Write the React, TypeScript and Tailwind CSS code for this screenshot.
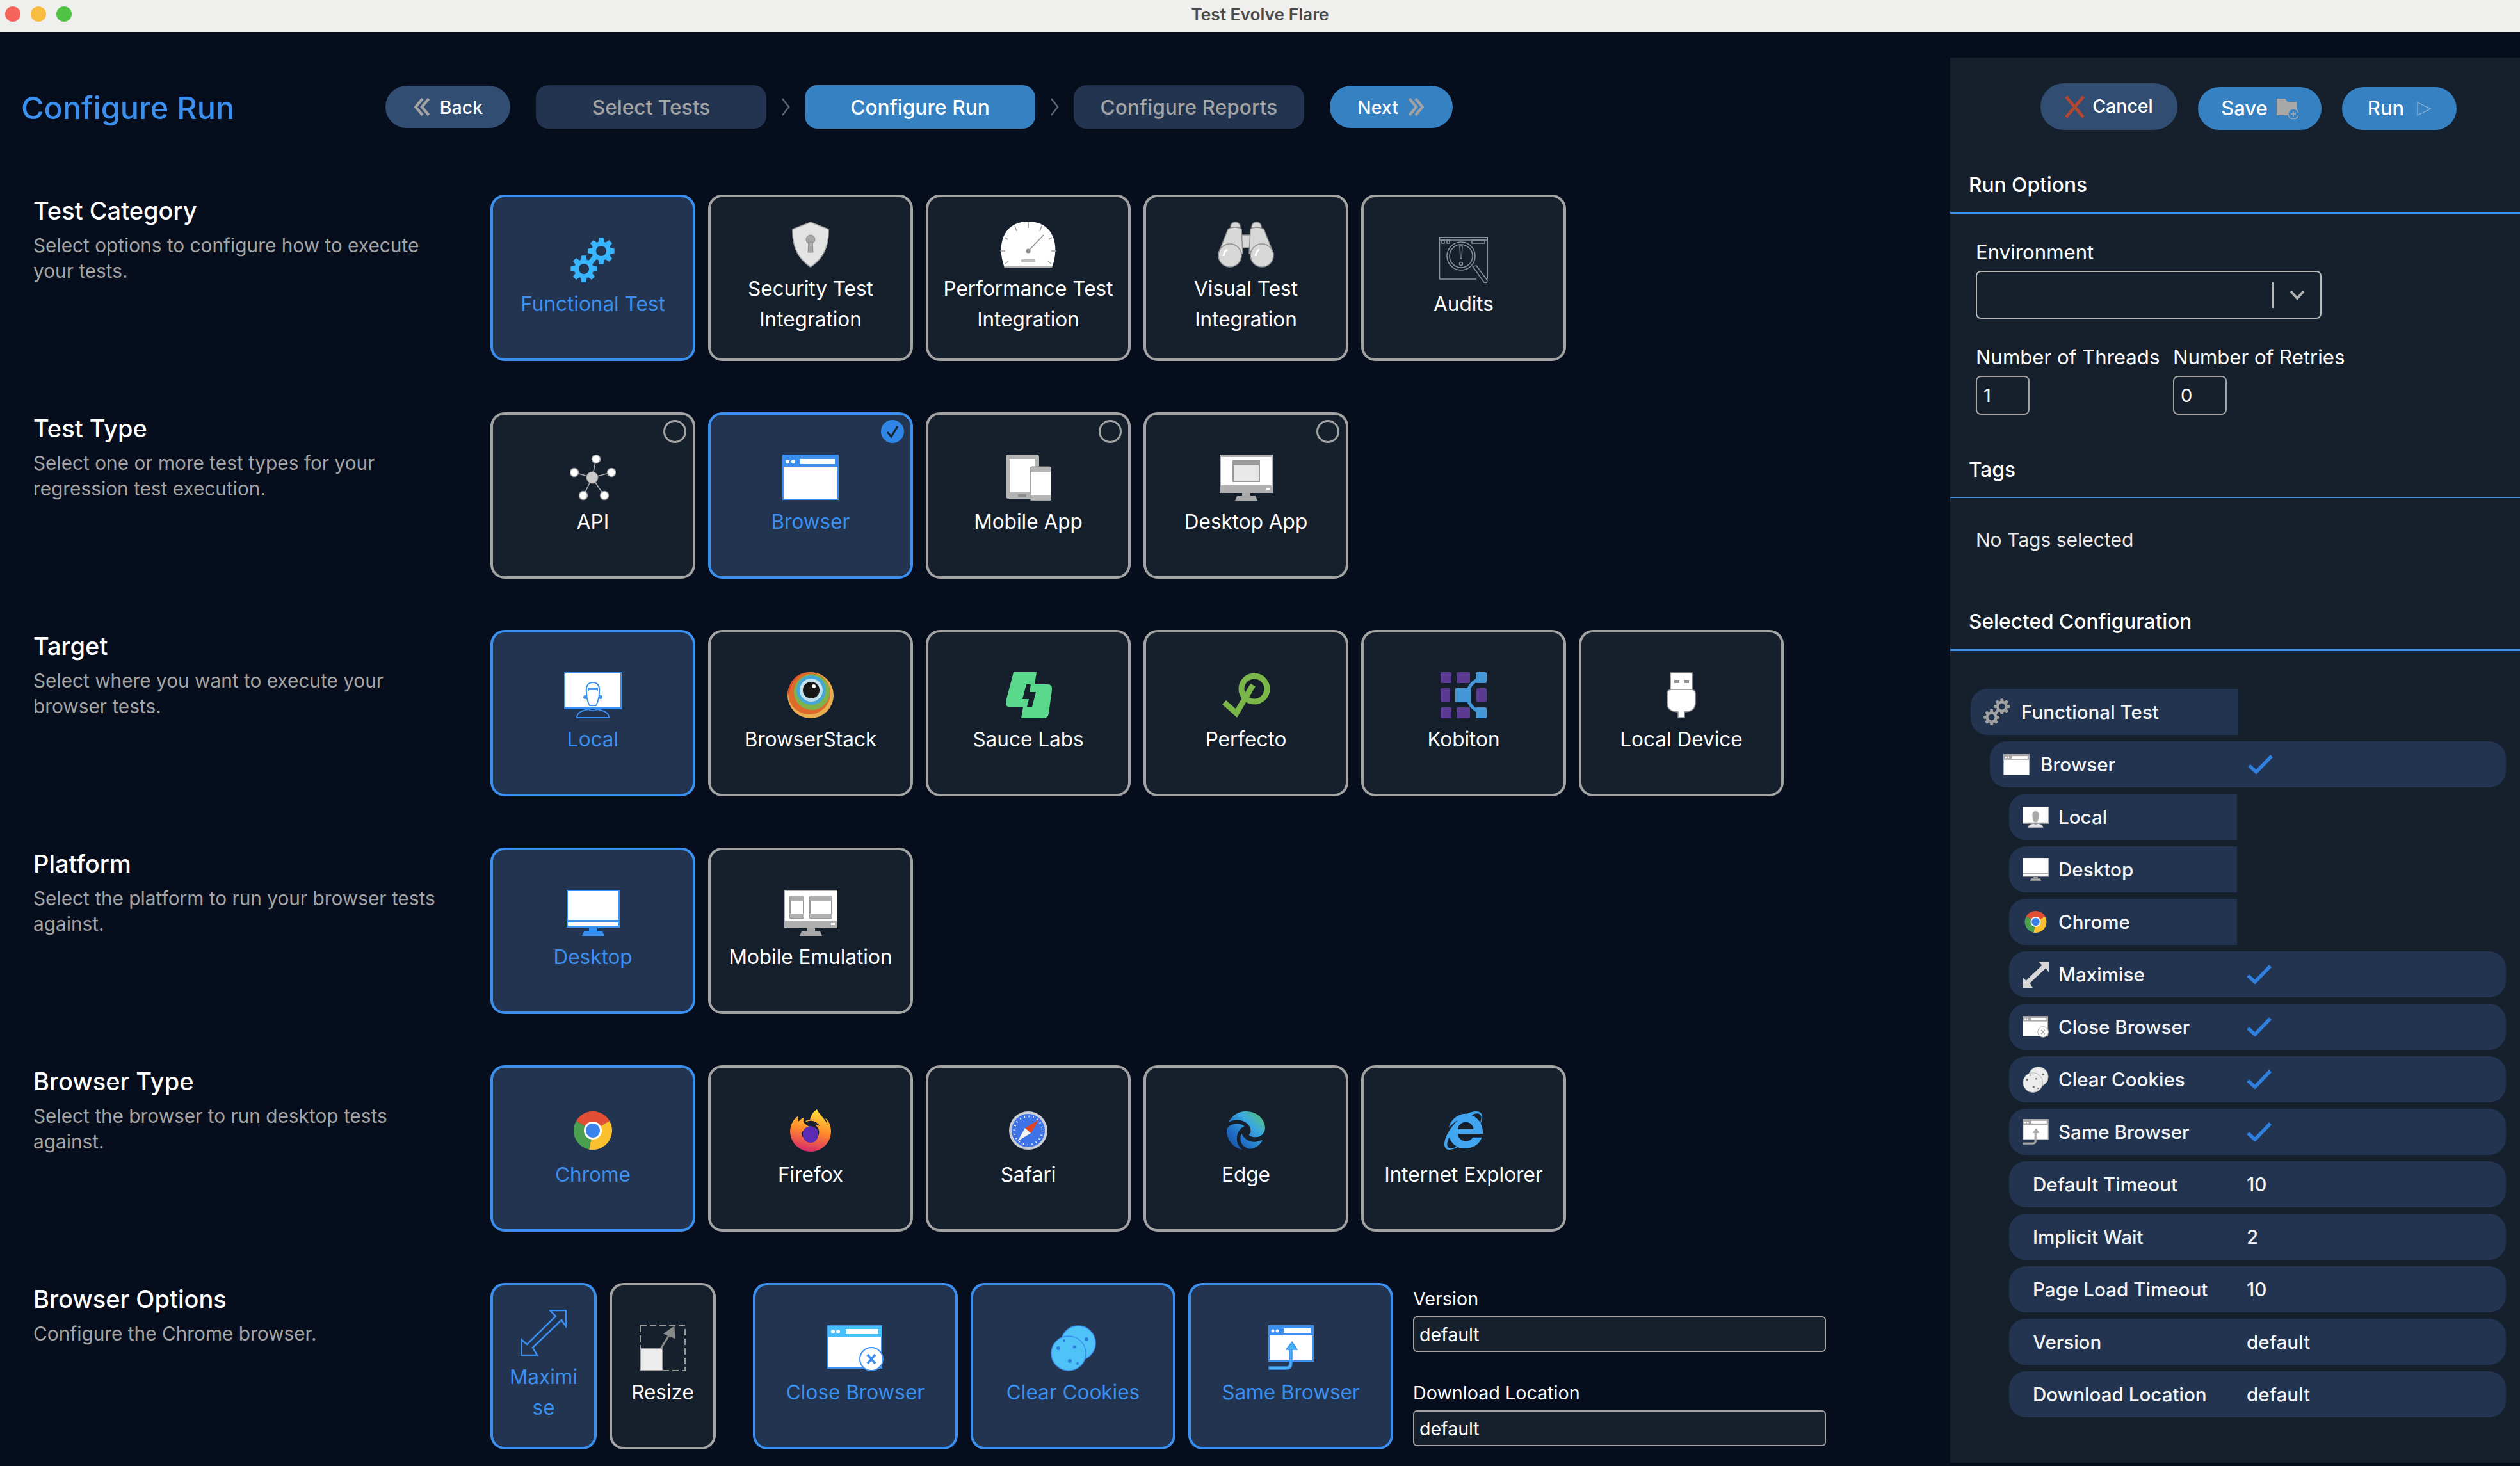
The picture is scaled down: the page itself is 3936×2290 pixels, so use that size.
import { FaInternetExplorer } from 'react-icons/fa';
import { FaEdge } from 'react-icons/fa6';
import { SiFirefoxbrowser } from 'react-icons/si';
import type { ReactNode } from 'react';

const BLUE = '#3b8fee';
const GRAY = '#9f9f9f';

type IconProps = { c?: string; className?: string };

// eight toothed gear, drawn from polar points
const gearPath = (cx: number, cy: number) => {
  const pts: string[] = [];
  for (let i = 0; i < 8; i++) {
    const a = (i * Math.PI) / 4;
    [[-0.3, 15], [-0.17, 21], [0.17, 21], [0.3, 15]].forEach(([d, r]) => {
      pts.push(`${(cx + r * Math.sin(a + d)).toFixed(1)} ${(cy - r * Math.cos(a + d)).toFixed(1)}`);
    });
  }
  return `M${pts.join(' L')} Z M${cx - 8} ${cy} a8 8 0 1 0 16 0 a8 8 0 1 0 -16 0 Z`;
};

const GearsIcon = ({ c = '#38b6ff', className = 'h-[72px] w-[70px]' }: IconProps) => (
  <svg viewBox="0 0 70 72" className={className}>
    <path d={gearPath(48, 22)} fill={c} fillRule="evenodd" />
    <path d={gearPath(21, 50)} fill={c} fillRule="evenodd" />
  </svg>
);

const ShieldIcon = () => (
  <svg viewBox="0 0 60 72" className="h-[72px] w-[60px]">
    <path d="M30 1 L58 12 C59 38 50 58 30 71 C10 58 1 38 2 12 Z" fill="#e4e4e4" stroke="#9f9f9f" strokeWidth="1.5" />
    <circle cx="30" cy="28" r="7" fill="#a8a8a8" stroke="#8c8c8c" />
    <path d="M27 32 H33 L34 48 H26 Z" fill="#a8a8a8" stroke="#8c8c8c" />
  </svg>
);

const GaugeIcon = () => (
  <svg viewBox="0 0 90 72" className="h-[72px] w-[90px]">
    <path d="M8 72 C-5 38 5 0 45 0 C85 0 95 38 82 72 Z" fill="#fff" />
    <path d="M45 1 V10 M24 7 L27 15 M66 7 L63 15 M8 25 L13 28 M82 25 L77 28 M1 46 H9 M89 46 H81 M9 66 L14 62 M81 66 L76 62" stroke="#9f9f9f" strokeWidth="1.6" />
    <path d="M45 46 L69 21" stroke="#8c8c8c" strokeWidth="1.8" />
    <circle cx="45" cy="46" r="3.5" fill="#8c8c8c" />
    <rect x="34" y="59" width="22" height="5" rx="1" fill="#bdbdbd" />
    <path d="M8 71 H82" stroke="#b0b0b0" strokeWidth="2" />
  </svg>
);

const BinocularsIcon = () => (
  <svg viewBox="0 0 90 72" className="h-[72px] w-[90px]">
    <g fill="#d8d8d8" stroke="#8f8f8f" strokeWidth="1.5">
      <rect x="21" y="1" width="15" height="18" rx="7" />
      <rect x="54" y="1" width="15" height="18" rx="7" />
      <rect x="37" y="21" width="16" height="20" />
      <path d="M17 12 C24 8 33 8 38 12 L40 50 H2 Z" />
      <path d="M52 12 C57 8 66 8 73 12 L88 50 H50 Z" />
      <ellipse cx="20" cy="53" rx="18" ry="18" />
      <ellipse cx="70" cy="53" rx="18" ry="18" />
    </g>
    <path d="M10 54 C11 47 13 45 16 44 M60 54 C61 47 63 45 66 44" stroke="#fff" strokeWidth="3" fill="none" />
  </svg>
);

const AuditsIcon = () => (
  <svg viewBox="0 0 76 72" className="h-[72px] w-[76px]" fill="none" stroke="#8c939b" strokeWidth="1.5">
    <path d="M0.5 66 V0.5 H75.5 V66" />
    <path d="M0.5 66 H58" />
    <path d="M0.5 5 H75.5" />
    <rect x="4" y="5" width="4" height="5" />
    <rect x="12" y="5" width="4" height="5" />
    <rect x="51" y="5" width="20" height="5" />
    <circle cx="34" cy="30" r="22" />
    <circle cx="34" cy="30" r="18" />
    <path d="M32 14 H36 L35 34 H33 Z" />
    <circle cx="34" cy="42" r="2.5" />
    <path d="M52 46 L58 45 L75 68 L74 72 L70 71 Z" />
  </svg>
);

const ApiIcon = () => (
  <svg viewBox="0 0 72 72" className="h-[72px] w-[72px]">
    <path d="M35 36 L41 7 M35 36 L7 28 M35 36 L65 28 M35 36 L21 65 M35 36 L54 65" stroke="#a8a8a8" strokeWidth="1.6" />
    <circle cx="35" cy="36" r="9" fill="#c9c9c9" stroke="#9f9f9f" />
    {[[41, 7], [7, 28], [65, 28], [21, 64], [54, 64]].map(([x, y]) => (
      <circle key={x} cx={x} cy={y} r="6.5" fill="#fff" stroke="#9f9f9f" strokeWidth="1.5" />
    ))}
  </svg>
);

const BrowserIcon = ({ c = GRAY, className = 'h-[71px] w-[88px]' }: IconProps) => (
  <svg viewBox="0 0 88 71" className={className}>
    <rect x="1" y="1" width="86" height="69" fill="#fff" stroke={c} strokeWidth="2" />
    <rect x="1" y="2" width="86" height="17" fill={c} />
    <circle cx="8" cy="11" r="3" fill="#fff" />
    <circle cx="17" cy="11" r="3" fill="#fff" />
    <rect x="28" y="7" width="54" height="8" fill="#fff" />
  </svg>
);

const PhonesIcon = () => (
  <svg viewBox="0 0 71 72" className="h-[72px] w-[71px]">
    <rect x="0" y="0" width="52" height="69" rx="4" fill="#b5b5b5" />
    <rect x="6" y="7" width="40" height="52" fill="#fff" />
    <rect x="19" y="62" width="13" height="4" rx="1" fill="#8c8c8c" />
    <rect x="38" y="19" width="33" height="53" rx="3" fill="#b5b5b5" stroke="#8f8f8f" />
    <rect x="39" y="27" width="31" height="36" fill="#fff" />
  </svg>
);

const Stand = ({ c }: { c: string }) => (
  <g fill={c}>
    <rect x="35" y="60" width="13" height="5" />
    <path d="M24 72 L27 65 H56 L59 72 Z" />
  </g>
);

const DesktopAppIcon = () => (
  <svg viewBox="0 0 83 72" className="h-[72px] w-[83px]">
    <rect width="83" height="60" fill="#b0b0b0" />
    <rect x="2" y="4" width="79" height="44" fill="#fff" />
    <rect x="21" y="10" width="41" height="32" fill="#e8e8e8" stroke="#9a9a9a" strokeWidth="2" />
    <rect x="21" y="10" width="41" height="7" fill="#9a9a9a" />
    <rect x="73" y="52" width="6" height="3" fill="#fff" />
    <Stand c="#a8a8a8" />
  </svg>
);

const LocalIcon = ({ c = GRAY, className = 'h-[72px] w-[90px]', solid }: IconProps & { solid?: boolean }) => (
  <svg viewBox="0 0 90 72" className={className}>
    <rect x="1" y="1" width="88" height="56" fill="#fff" stroke={c} strokeWidth="2" />
    <rect x="0" y="54" width="90" height="4" fill={c} />
    <path d="M45 16 C36 16 34 24 35 32 C35 40 38 48 40 52 H50 C52 48 55 40 55 32 C56 24 54 16 45 16 Z" fill={solid ? c : '#fff'} stroke={c} strokeWidth="2" />
    {!solid && (
      <>
        <path d="M37 24 H53 V30 H37 Z" fill={c} opacity=".9" />
        <path d="M39 28 H51 V48 C48 51 42 51 39 48 Z" fill="#fff" />
        <circle cx="33" cy="39" r="3" fill={c} />
        <circle cx="57" cy="39" r="3" fill={c} />
      </>
    )}
    <path d="M20 71 C20 62 30 60 38 58 C42 61 48 61 52 58 C60 60 70 62 70 71 Z" fill={solid ? '#e8e8e8' : 'none'} stroke={c} strokeWidth="2" />
  </svg>
);

const BrowserStackIcon = () => (
  <svg viewBox="0 0 72 72" className="h-[72px] w-[72px]">
    <circle cx="36" cy="36" r="36" fill="#e9ae4f" />
    <circle cx="34" cy="33" r="33" fill="#dd6a2b" />
    <circle cx="38" cy="31" r="28" fill="#7fb24a" />
    <circle cx="37" cy="28" r="23" fill="#45a6d8" />
    <circle cx="37" cy="28" r="18" fill="#bfe0ea" />
    <circle cx="37" cy="28" r="13" fill="#161616" />
    <circle cx="41" cy="22" r="3" fill="#fff" />
    <path d="M0 36 A36 36 0 0 1 36 0 A33 33 0 0 0 4 28 Z" fill="#d9452b" />
  </svg>
);

const SauceIcon = () => (
  <svg viewBox="0 0 73 72" className="h-[72px] w-[73px]" fill="#5ad88c">
    <path d="M13 0 H49 L46 19 H33 L27 42 H37 L34 54 H6 Q0 54 1 46 Z" />
    <path d="M52 19 H66 Q74 19 73 28 L68 64 Q67 72 60 72 H25 L28 54 H42 L48 31 H38 L40 19 Z" />
  </svg>
);

const PerfectoIcon = () => (
  <svg viewBox="0 0 74 72" className="h-[72px] w-[74px]" fill="none" stroke="#7ab648" strokeWidth="9">
    <circle cx="50" cy="26" r="20" />
    <path d="M3 47 L22 64 L48 20" />
  </svg>
);

const KobitonIcon = () => (
  <svg viewBox="0 0 72 72" className="h-[72px] w-[72px]">
    <g fill="#5b3a91">
      <rect width="17" height="17" rx="2" />
      <rect x="25" width="21" height="17" rx="2" />
      <rect y="25" width="15" height="21" rx="2" />
      <rect x="56" y="25" width="16" height="21" rx="2" />
      <rect y="55" width="17" height="17" rx="2" />
      <rect x="25" y="55" width="21" height="17" rx="2" />
    </g>
    <g fill="#4598d8">
      <rect x="55" width="17" height="17" rx="2" />
      <rect x="23" y="25" width="24" height="22" rx="2" />
      <rect x="55" y="55" width="17" height="17" rx="2" />
    </g>
    <path d="M42 30 C46 20 50 16 60 10 M42 42 C46 52 50 56 60 62" fill="none" stroke="#4598d8" strokeWidth="5" />
  </svg>
);

const UsbIcon = () => (
  <svg viewBox="0 0 46 72" className="h-[72px] w-[46px]">
    <rect x="6" y="1" width="34" height="27" fill="#fff" stroke="#8f8f8f" strokeWidth="1.6" />
    <rect x="12" y="12" width="8" height="5" fill="#8f8f8f" />
    <rect x="27" y="12" width="8" height="5" fill="#8f8f8f" />
    <path d="M8 27 H38 Q45 27 45 34 V48 Q45 62 28 62 V71 H18 V62 Q1 62 1 48 V34 Q1 27 8 27 Z" fill="#fff" stroke="#8f8f8f" strokeWidth="1.6" />
  </svg>
);

const DesktopIcon = ({ c = GRAY, className = 'h-[72px] w-[83px]' }: IconProps) => (
  <svg viewBox="0 0 83 72" className={className}>
    <rect x="1" y="1" width="81" height="57" fill="#fff" stroke={c} strokeWidth="2" />
    <rect x="1" y="47" width="81" height="4" fill={c} />
    <rect x="1" y="56" width="81" height="3" fill={c} />
    <Stand c={c} />
  </svg>
);

const EmulationIcon = () => (
  <svg viewBox="0 0 83 72" className="h-[72px] w-[83px]">
    <rect width="83" height="60" fill="#b0b0b0" />
    <rect x="1" y="2" width="81" height="46" fill="#fff" />
    <g fill="#fff" stroke="#9a9a9a" strokeWidth="2">
      <rect x="9" y="10" width="21" height="35" rx="2" />
      <rect x="40" y="10" width="34" height="35" rx="2" />
    </g>
    <g fill="#b0b0b0">
      <rect x="9" y="10" width="21" height="7" />
      <rect x="9" y="37" width="21" height="7" />
      <rect x="40" y="10" width="34" height="7" />
      <rect x="40" y="37" width="34" height="7" />
    </g>
    <rect x="73" y="52" width="6" height="3" fill="#fff" />
    <Stand c="#a8a8a8" />
  </svg>
);

const ChromeIcon = ({ className = 'h-[60px] w-[60px]' }: IconProps) => (
  <svg viewBox="0 0 60 60" className={className}>
    <path d="M30 30 L4 15 A30 30 0 0 1 56 15 Z" fill="#e34f35" />
    <path d="M30 30 L56 15 A30 30 0 0 1 24 59.4 Z" fill="#fbc02d" />
    <path d="M30 30 L24 59.4 A30 30 0 0 1 4 15 Z" fill="#4ba04f" />
    <circle cx="30" cy="30" r="14" fill="#fff" />
    <circle cx="30" cy="30" r="11" fill="#3b82ea" />
  </svg>
);

const FirefoxIcon = () => (
  <span className="relative flex h-[66px] w-[66px] items-center justify-center">
    <svg className="absolute h-0 w-0">
      <defs>
        <linearGradient id="ffx" x1="0.6" y1="0" x2="0.4" y2="1">
          <stop offset="0" stopColor="#ffe03a" />
          <stop offset="0.5" stopColor="#ff8a2b" />
          <stop offset="1" stopColor="#d9286c" />
        </linearGradient>
      </defs>
    </svg>
    <SiFirefoxbrowser fill="url(#ffx)" className="h-[66px] w-[66px]" />
    <span className="absolute left-[21px] top-[26px] h-[26px] w-[24px] rounded-full bg-[#5b2bb5]" />
  </span>
);

const SafariIcon = () => (
  <svg viewBox="0 0 60 60" className="h-[60px] w-[60px]">
    <circle cx="30" cy="30" r="30" fill="#c9cdd3" />
    <circle cx="30" cy="30" r="26" fill="#3f74e8" />
    <circle cx="30" cy="30" r="22" fill="none" stroke="#fff" strokeWidth="3" strokeDasharray="1.2 5.7" />
    <path d="M47 13 L25 26 L34 34 Z" fill="#e3431f" />
    <path d="M13 47 L25 26 L34 34 Z" fill="#f4f4f4" />
  </svg>
);

const EdgeIcon = () => (
  <span className="flex h-[60px] w-[60px]">
    <svg className="absolute h-0 w-0">
      <defs>
        <linearGradient id="edg" x1="1" y1="0" x2="0" y2="1">
          <stop offset="0" stopColor="#5ec65a" />
          <stop offset="0.35" stopColor="#3aa8e0" />
          <stop offset="0.7" stopColor="#1f6cc4" />
          <stop offset="1" stopColor="#174a96" />
        </linearGradient>
      </defs>
    </svg>
    <FaEdge fill="url(#edg)" className="h-[60px] w-[60px]" />
  </span>
);

const IeIcon = () => <FaInternetExplorer className="h-[60px] w-[60px] text-[#42a5f0]" />;

const MaximiseIcon = ({ c = GRAY, className = 'h-[72px] w-[72px]', fill = 'none' }: IconProps & { fill?: string }) => (
  <svg viewBox="0 0 72 72" className={className}>
    <path d="M46 1 H71 V26 L64 16 L19 59 L26 71 H1 V46 L10 54 L55 10 Z" fill={fill} stroke={c} strokeWidth="2.5" />
  </svg>
);

const ResizeIcon = () => (
  <svg viewBox="0 0 72 72" className="h-[72px] w-[72px]">
    <rect x="1" y="1" width="70" height="70" fill="none" stroke="#9a9a9a" strokeWidth="2" strokeDasharray="10 5" />
    <rect x="1" y="37" width="35" height="34" fill="#ececec" stroke="#9a9a9a" strokeWidth="2" />
    <path d="M33 37 L47 14 M40 13 L54 19 L53 4 Z" stroke="#8a8a8a" strokeWidth="3" fill="#8a8a8a" />
  </svg>
);

const CloseBrowserIcon = ({ c = '#47c1fb', line = BLUE, className = 'h-[72px] w-[88px]' }: IconProps & { line?: string }) => (
  <svg viewBox="0 0 88 72" className={className}>
    <rect x="1" y="1" width="84" height="66" fill="#fff" stroke={line} strokeWidth="2" />
    <rect x="1" y="2" width="84" height="16" fill={c} />
    <circle cx="9" cy="10" r="3" fill="#fff" />
    <circle cx="17" cy="10" r="3" fill="#fff" />
    <rect x="29" y="6" width="51" height="8" fill="#fff" />
    <circle cx="69" cy="53" r="18" fill="#fff" stroke={line} strokeWidth="2" />
    <path d="M63 46 L75 60 M75 46 L63 60" stroke={line} strokeWidth="3.5" />
  </svg>
);

const CookiesIcon = ({ c = '#4fc3f7', line = BLUE, dot = '#2f7fdf', className = 'h-[72px] w-[71px]' }: IconProps & { line?: string; dot?: string }) => (
  <svg viewBox="0 0 71 72" className={className}>
    <circle cx="43" cy="28" r="27" fill={c} stroke={line} strokeWidth="1.5" />
    <circle cx="28" cy="44" r="27" fill={c} stroke={line} strokeWidth="1.5" />
    <g fill={dot}>
      <circle cx="12" cy="36" r="3" />
      <circle cx="21" cy="24" r="2" />
      <circle cx="30" cy="56" r="3" />
      <circle cx="37" cy="34" r="2.5" />
      <circle cx="42" cy="60" r="2" />
      <circle cx="56" cy="22" r="3" />
    </g>
  </svg>
);

const SameBrowserIcon = ({ c = '#47b5f5', line = BLUE, className = 'h-[72px] w-[71px]' }: IconProps & { line?: string }) => (
  <svg viewBox="0 0 71 72" className={className}>
    <rect x="1" y="1" width="69" height="55" fill="#fff" stroke={line} strokeWidth="2" />
    <rect x="1" y="2" width="69" height="14" fill={line} />
    <circle cx="7" cy="9" r="2.5" fill="#fff" />
    <circle cx="14" cy="9" r="2.5" fill="#fff" />
    <rect x="24" y="5" width="42" height="7" fill="#fff" />
    <path d="M1 69 H28 Q37 69 37 60 V38 H45 L37 26 L28 38 H33 V60 Q33 65 28 65 H1 Z" fill={c} stroke={line} strokeWidth="1.5" />
  </svg>
);

type Card = { label: string; icon: ReactNode; on?: boolean; radio?: boolean; narrow?: boolean };

const Tile = ({ label, icon, on, radio, narrow }: Card) => (
  <div
    className={`relative flex h-[260px] shrink-0 flex-col items-center justify-center rounded-[22px] border-[4px] ${narrow ? 'w-[166px] px-[18px]' : 'w-[320px] px-[6px]'} ${
      on ? 'border-[#3b8fee] bg-[#22344f] text-[#3b8fee]' : 'border-[#a3a3a3] bg-[#16202d] text-white'
    }`}
  >
    <div className="flex h-[72px] items-center justify-center">{icon}</div>
    <div className="mt-[9px] w-full text-center text-[31.5px] leading-[48px] [overflow-wrap:anywhere]">{label}</div>
    {radio &&
      (on ? (
        <svg viewBox="0 0 36 36" className="absolute right-[10px] top-[8px] h-[36px] w-[36px]">
          <circle cx="18" cy="18" r="18" fill="#2f86e6" />
          <path d="M10 19 L16 26 L26 10" fill="none" stroke="#16202d" strokeWidth="3" />
        </svg>
      ) : (
        <span className="absolute right-[10px] top-[8px] h-[36px] w-[36px] rounded-full border-[3px] border-[#a3a3a3]" />
      ))}
  </div>
);

const sections: { title: string; desc: string; cards: Card[] }[] = [
  {
    title: 'Test Category',
    desc: 'Select options to configure how to execute your tests.',
    cards: [
      { label: 'Functional Test', icon: <GearsIcon />, on: true },
      { label: 'Security Test Integration', icon: <ShieldIcon /> },
      { label: 'Performance Test Integration', icon: <GaugeIcon /> },
      { label: 'Visual Test Integration', icon: <BinocularsIcon /> },
      { label: 'Audits', icon: <AuditsIcon /> },
    ],
  },
  {
    title: 'Test Type',
    desc: 'Select one or more test types for your regression test execution.',
    cards: [
      { label: 'API', icon: <ApiIcon />, radio: true },
      { label: 'Browser', icon: <BrowserIcon c={BLUE} />, on: true, radio: true },
      { label: 'Mobile App', icon: <PhonesIcon />, radio: true },
      { label: 'Desktop App', icon: <DesktopAppIcon />, radio: true },
    ],
  },
  {
    title: 'Target',
    desc: 'Select where you want to execute your browser tests.',
    cards: [
      { label: 'Local', icon: <LocalIcon c={BLUE} />, on: true },
      { label: 'BrowserStack', icon: <BrowserStackIcon /> },
      { label: 'Sauce Labs', icon: <SauceIcon /> },
      { label: 'Perfecto', icon: <PerfectoIcon /> },
      { label: 'Kobiton', icon: <KobitonIcon /> },
      { label: 'Local Device', icon: <UsbIcon /> },
    ],
  },
  {
    title: 'Platform',
    desc: 'Select the platform to run your browser tests against.',
    cards: [
      { label: 'Desktop', icon: <DesktopIcon c={BLUE} />, on: true },
      { label: 'Mobile Emulation', icon: <EmulationIcon /> },
    ],
  },
  {
    title: 'Browser Type',
    desc: 'Select the browser to run desktop tests against.',
    cards: [
      { label: 'Chrome', icon: <ChromeIcon />, on: true },
      { label: 'Firefox', icon: <FirefoxIcon /> },
      { label: 'Safari', icon: <SafariIcon /> },
      { label: 'Edge', icon: <EdgeIcon /> },
      { label: 'Internet Explorer', icon: <IeIcon /> },
    ],
  },
];

const SectionText = ({ title, desc }: { title: string; desc: string }) => (
  <div className="w-[714px] shrink-0 pr-[80px] pt-px">
    <h3 className="text-[38px] font-medium leading-[48px] text-white">{title}</h3>
    <p className="mt-[10px] text-[29.8px] leading-[40px] text-[#a3a3a3]">{desc}</p>
  </div>
);

const DoubleChevron = ({ right }: { right?: boolean }) => (
  <svg viewBox="0 0 28 28" className={`h-[30px] w-[30px] ${right ? '' : 'rotate-180'}`} fill="none" stroke="#a3a3a3" strokeWidth="4">
    <path d="M5 2 L15 14 L5 26 M14 2 L24 14 L14 26" />
  </svg>
);

const StepChevron = () => (
  <div className="flex w-[60px] justify-center">
    <svg viewBox="0 0 14 30" className="h-[30px] w-[14px]" fill="none" stroke="#5f6670" strokeWidth="2.5">
      <path d="M2 2 L12 15 L2 28" />
    </svg>
  </div>
);

const Check = () => (
  <svg viewBox="0 0 39 30" className="h-[30px] w-[39px]" fill="none" stroke="#2f7fdf" strokeWidth="5.5">
    <path d="M2 17 L13 27 L37 2" />
  </svg>
);

type TreeRow = { label: string; level: 0 | 1 | 2; icon?: ReactNode; check?: boolean; value?: string };

const tree: TreeRow[] = [
  { label: 'Functional Test', level: 0, icon: <GearsIcon c="#a0a0a0" className="h-[44px] w-[43px]" /> },
  { label: 'Browser', level: 1, icon: <BrowserIcon c="#a8a8a8" className="h-[33px] w-[41px]" />, check: true },
  { label: 'Local', level: 2, icon: <LocalIcon solid c="#a8a8a8" className="h-[33px] w-[41px]" /> },
  { label: 'Desktop', level: 2, icon: <DesktopIcon c="#a8a8a8" className="h-[36px] w-[41px]" /> },
  { label: 'Chrome', level: 2, icon: <ChromeIcon className="h-[34px] w-[35px]" /> },
  { label: 'Maximise', level: 2, icon: <MaximiseIcon c="#d8d8d8" fill="#d8d8d8" className="h-[41px] w-[41px]" />, check: true },
  { label: 'Close Browser', level: 2, icon: <CloseBrowserIcon c="#a8a8a8" line="#a8a8a8" className="h-[34px] w-[41px]" />, check: true },
  { label: 'Clear Cookies', level: 2, icon: <CookiesIcon c="#ececec" line="#b0b0b0" dot="#777" className="h-[41px] w-[41px]" />, check: true },
  { label: 'Same Browser', level: 2, icon: <SameBrowserIcon c="#a8a8a8" line="#a8a8a8" className="h-[41px] w-[41px]" />, check: true },
  { label: 'Default Timeout', level: 2, value: '10' },
  { label: 'Implicit Wait', level: 2, value: '2' },
  { label: 'Page Load Timeout', level: 2, value: '10' },
  { label: 'Version', level: 2, value: 'default' },
  { label: 'Download Location', level: 2, value: 'default' },
];

const Row = ({ label, level, icon, check, value }: TreeRow) => {
  const filled = check || value;
  const indent = level === 0 ? 'ml-[32px]' : level === 1 ? 'ml-[62px]' : 'ml-[92px]';
  const width = level === 0 ? 'w-[418px]' : level === 1 ? 'w-[388px]' : 'w-[356px]';
  return (
    <div className={`flex h-[72px] ${indent}`}>
      <div className={`flex shrink-0 items-center rounded-l-[26px] bg-[#22344f] ${width} ${icon ? 'pl-[20px]' : 'pl-[37px]'}`}>
        {icon && <div className={`flex w-[42px] justify-center ${level === 2 ? 'mr-[15px]' : 'mr-[17px]'}`}>{icon}</div>}
        <span className="text-[29.6px] font-medium text-[#f2f4f7]">{label}</span>
      </div>
      <div
        className={`flex flex-1 items-center rounded-r-[26px] pl-[15px] text-[29.6px] font-medium text-[#f2f4f7] ${
          filled ? 'bg-[#22344f]' : 'bg-[#15202c]'
        }`}
      >
        {check && <Check />}
        {value}
      </div>
    </div>
  );
};

const PanelHeading = ({ children, line }: { children: ReactNode; line: string }) => (
  <div className={`flex items-end pl-[29px] text-[31.7px] font-medium leading-[32px] text-white ${line}`}>{children}</div>
);

const Field = ({ label, value }: { label: string; value: string }) => (
  <div>
    <div className="text-[28.7px] leading-[36px] text-white">{label}</div>
    <div className="mt-[9px] flex h-[56px] items-center rounded-[6px] border-[2.5px] border-[#a3a3a3] bg-[#16202d] pl-[8px] pt-[3px] text-[28.5px] text-white">{value}</div>
  </div>
);

export default function App() {
  return (
    <div className="flex h-[2290px] w-[3936px] flex-col overflow-hidden bg-[#060d1d] font-[Inter,sans-serif] antialiased">
      {/* Window title bar */}
      <div className="relative flex h-[50px] shrink-0 items-center justify-center bg-[#efefed] pb-[4px]">
        <div className="absolute left-[8px] top-[10px] flex gap-[16px]">
          <span className="h-[24px] w-[24px] rounded-full bg-[#f6635a]" />
          <span className="h-[24px] w-[24px] rounded-full bg-[#f8bd3e]" />
          <span className="h-[24px] w-[24px] rounded-full bg-[#4fc143]" />
        </div>
        <span className="text-[26.3px] font-semibold text-[#4a4a4a]">Test Evolve Flare</span>
      </div>

      <div className="flex flex-1">
        <main className="w-[3046px] shrink-0">
          {/* Steps */}
          <div className="mt-[83px] flex h-[68px] items-center pl-[33px]">
            <h1 className="w-[569px] pt-[4px] text-[48.5px] font-medium text-[#3b8fee]">Configure Run</h1>
            <button className="flex h-[66px] w-[195px] items-center justify-center gap-[12px] rounded-full bg-[#324d72] text-[28.5px] font-medium text-white">
              <DoubleChevron />
              <span className="pt-[2px]">Back</span>
            </button>
            <div className="ml-[40px] flex h-[68px] w-[360px] items-center justify-center rounded-[20px] bg-[#22344f] pt-[2px] text-[31.7px] font-medium text-[#a3a3a3]">Select Tests</div>
            <StepChevron />
            <div className="flex h-[68px] w-[360px] items-center justify-center rounded-[20px] bg-[#3581c1] pt-[2px] text-[31.7px] font-medium text-white">Configure Run</div>
            <StepChevron />
            <div className="flex h-[68px] w-[360px] items-center justify-center rounded-[20px] bg-[#22344f] pt-[2px] text-[31.7px] font-medium text-[#a3a3a3]">Configure Reports</div>
            <button className="ml-[40px] flex h-[66px] w-[192px] items-center justify-center gap-[12px] rounded-full bg-[#3581c1] text-[28.5px] font-medium text-white">
              <span className="pt-[2px]">Next</span>
              <DoubleChevron right />
            </button>
          </div>

          {/* Option rows */}
          <div className="mt-[103px] flex flex-col gap-[80px] pl-[52px]">
            {sections.map((s) => (
              <section key={s.title} className="flex">
                <SectionText title={s.title} desc={s.desc} />
                <div className="flex gap-[20px]">
                  {s.cards.map((c) => (
                    <Tile key={c.label} {...c} />
                  ))}
                </div>
              </section>
            ))}
            <section className="flex">
              <SectionText title="Browser Options" desc="Configure the Chrome browser." />
              <div className="flex gap-[20px]">
                <Tile narrow on label="Maximise" icon={<MaximiseIcon c={BLUE} />} />
                <Tile narrow label="Resize" icon={<ResizeIcon />} />
              </div>
              <div className="ml-[58px] flex gap-[20px]">
                <Tile on label="Close Browser" icon={<CloseBrowserIcon />} />
                <Tile on label="Clear Cookies" icon={<CookiesIcon />} />
                <Tile on label="Same Browser" icon={<SameBrowserIcon />} />
              </div>
              <div className="ml-[31px] flex w-[645px] flex-col gap-[46px] pt-[7px]">
                <Field label="Version" value="default" />
                <Field label="Download Location" value="default" />
              </div>
            </section>
          </div>
        </main>

        {/* Run panel */}
        <aside className="mb-[5px] mt-[40px] flex-1 bg-[#16202d]">
          <div className="flex items-end gap-[32px] pl-[141px] pt-[40px] text-[31px] font-medium text-white">
            <button className="flex h-[73px] w-[214px] items-center justify-center gap-[12px] rounded-full bg-[#324d72] text-[28.5px]">
              <svg viewBox="0 0 31 36" className="h-[36px] w-[31px]" fill="none" stroke="#b4452f" strokeWidth="5">
                <path d="M2 2 L29 34 M29 2 L2 34" />
              </svg>
              Cancel
            </button>
            <button className="flex h-[67px] w-[193px] items-center justify-center gap-[14px] rounded-full bg-[#3581c1]">
              Save
              <svg viewBox="0 0 34 32" className="h-[32px] w-[34px]">
                <path d="M0 0 H13 L17 5 H32 V26 H0 Z" fill="#a8a8a8" />
                <circle cx="26" cy="24" r="8" fill="#3581c1" stroke="#a8a8a8" strokeWidth="1.5" />
                <path d="M22 24 H30 M26 20 V28" stroke="#a8a8a8" strokeWidth="1.5" />
              </svg>
            </button>
            <button className="flex h-[67px] w-[179px] items-center justify-center gap-[20px] rounded-full bg-[#3581c1]">
              Run
              <svg viewBox="0 0 22 22" className="h-[22px] w-[22px]" fill="none" stroke="#8fb6d8" strokeWidth="1.2">
                <path d="M1 1 L21 11 L1 21 Z" />
              </svg>
            </button>
          </div>

          <PanelHeading line="h-[131px] border-b-[3px] border-[#3b8fee] pb-[26px]">Run Options</PanelHeading>
          <div className="pl-[40px] pt-[42px] text-[31.2px] text-white">
            <div className="leading-[36px]">Environment</div>
            <div className="mt-[11px] flex h-[75px] w-[540px] items-center justify-end rounded-[8px] border-[2px] border-[#b8b8b8]">
              <span className="h-[40px] w-[2px] bg-[#b8b8b8]" />
              <svg viewBox="0 0 24 16" className="ml-[25px] mr-[24px] h-[16px] w-[24px]" fill="none" stroke="#b0b0b0" strokeWidth="4">
                <path d="M2 2 L12 13 L22 2" />
              </svg>
            </div>
            <div className="mt-[42px] flex">
              {[['Number of Threads', '1'], ['Number of Retries', '0']].map(([label, value]) => (
                <div key={label} className="w-[308px]">
                  <div className="whitespace-nowrap leading-[36px]">{label}</div>
                  <div className="mt-[11px] flex h-[61px] w-[84px] items-center rounded-[8px] border-[2px] border-[#a3a3a3] pl-[10px] text-[29px]">{value}</div>
                </div>
              ))}
            </div>
          </div>

          <PanelHeading line="h-[130px] border-b-[2px] border-[#3b8fee] pb-[26px]">Tags</PanelHeading>
          <div className="h-[109px] pl-[40px] pt-[47px] text-[30px] leading-[36px] text-[#e8e8e8]">No Tags selected</div>
          <PanelHeading line="h-[130px] border-b-[3px] border-[#3b8fee] pb-[27px]">Selected Configuration</PanelHeading>

          <div className="mt-[59px] flex flex-col gap-[10px] pr-[22px]">
            {tree.map((r) => (
              <Row key={r.label} {...r} />
            ))}
          </div>
        </aside>
      </div>
    </div>
  );
}
